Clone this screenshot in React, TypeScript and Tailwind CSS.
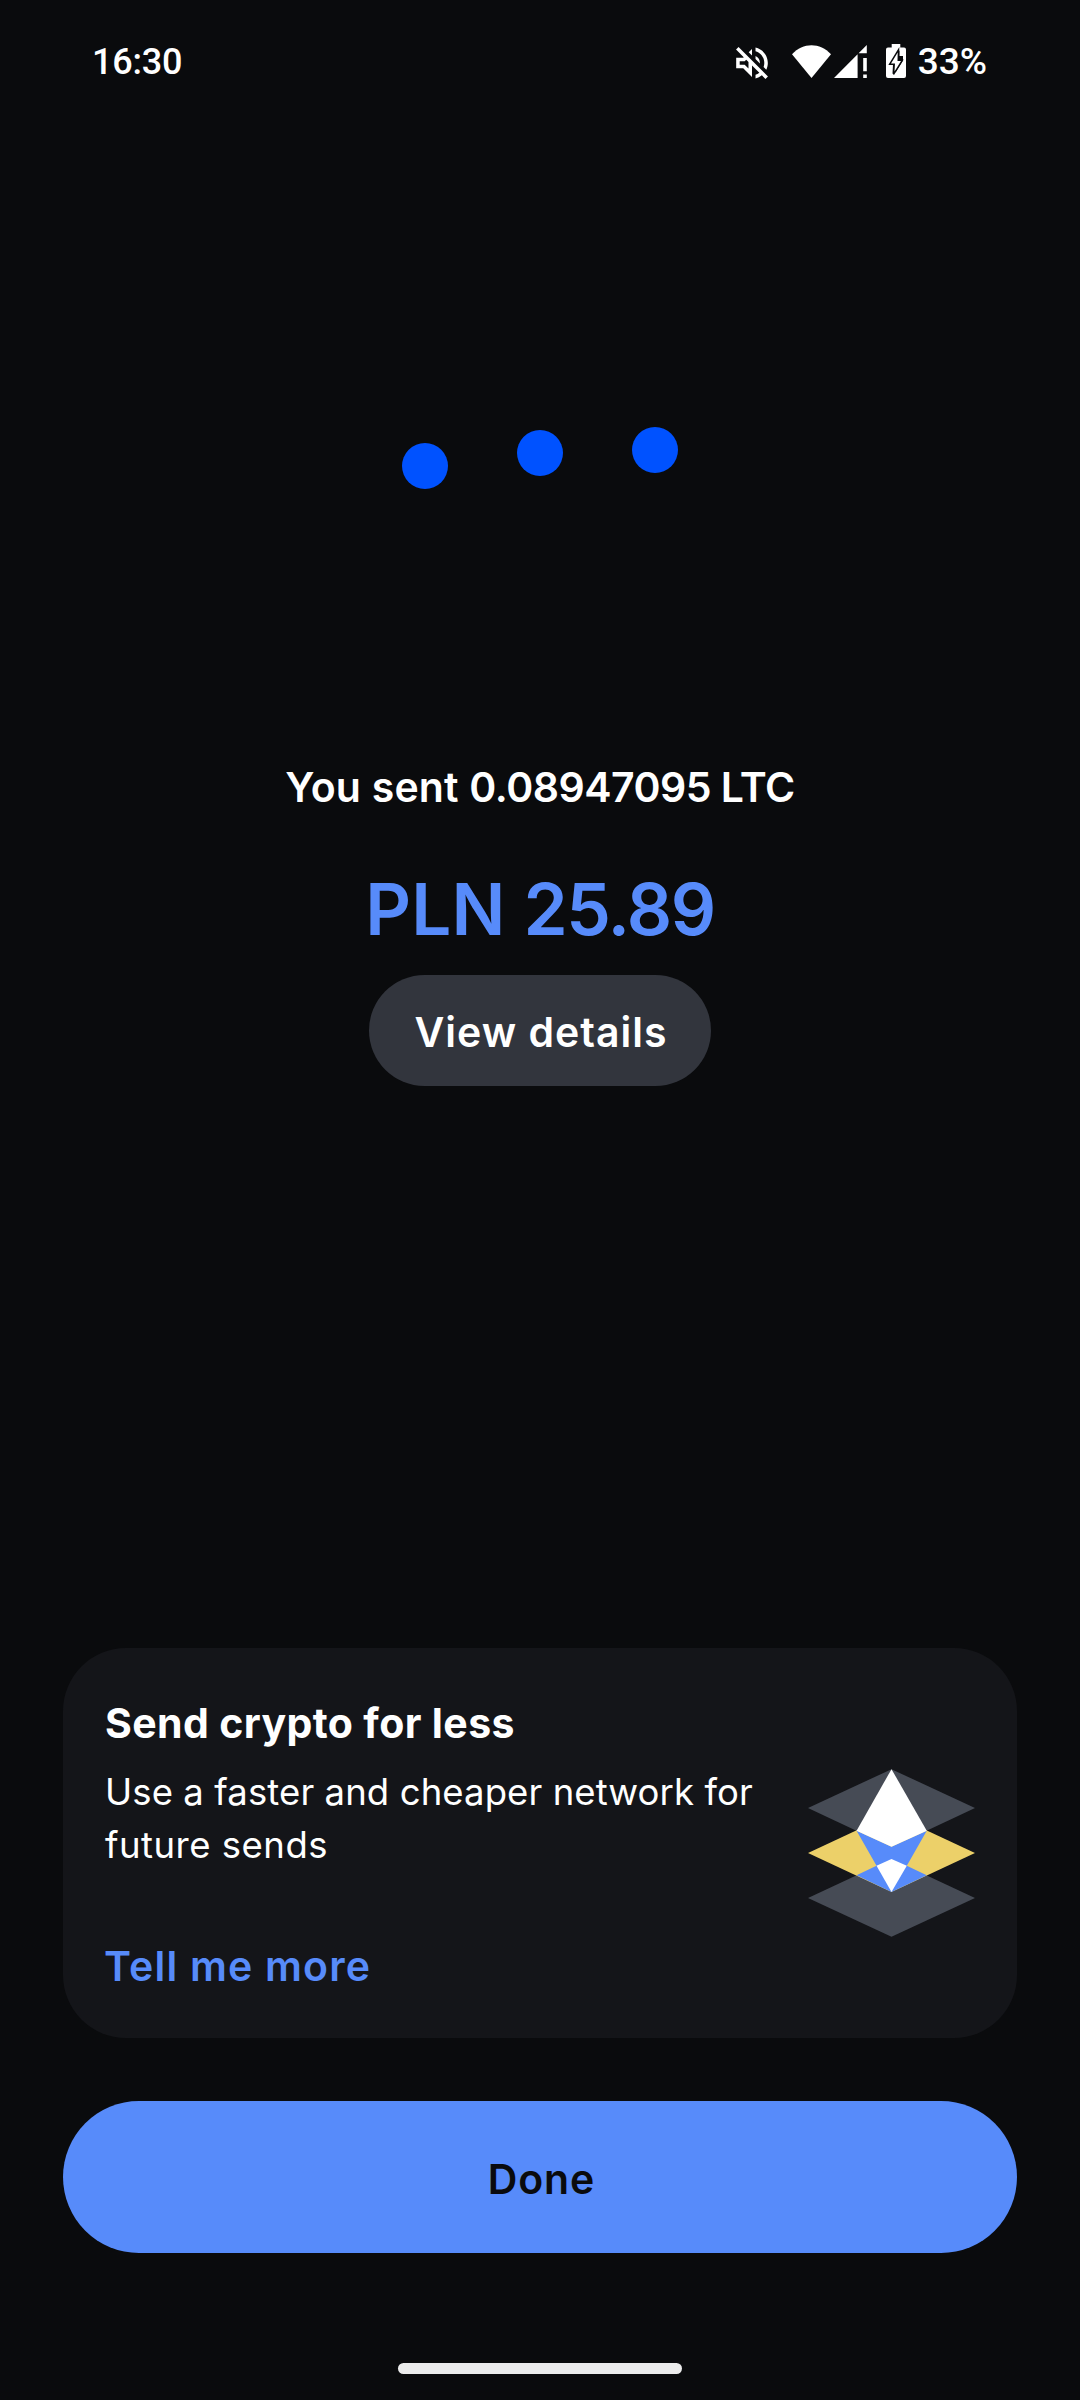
const MutedIcon = () => (
  <svg viewBox="2.9 2.9 18.2 18.2" className="mt-[3px] h-8 w-8 fill-current">
    <path d="M4.34 2.93 2.93 4.34 7.29 8.7 7 9H3v6h4l5 5v-6.59l4.18 4.18c-.65.49-1.38.88-2.18 1.11v2.06a8.94 8.94 0 0 0 3.61-1.75l2.05 2.05 1.41-1.41L4.34 2.93zM10 15.17 7.83 13H5v-2h2.83l.88-.88L10 11.41v3.76zM19 12c0 .82-.15 1.61-.41 2.34l1.53 1.53c.56-1.17.88-2.48.88-3.87 0-4.28-2.99-7.86-7-8.77v2.06c2.89.86 5 3.54 5 6.71zm-7-8-1.88 1.88L12 7.76V4zm4.500 8A4.500 4.500 0 0 0 14 7.970v1.790l2.480 2.480c.01-.08.02-.16.02-.24z" />
  </svg>
);

const WifiIcon = () => (
  <svg viewBox="0 0 39 33" className="ml-6 h-[33px] w-[39px] fill-current">
    <path d="M0 9.2C11-2.9 28-2.9 39 9.2L19.5 33z" />
  </svg>
);

const SignalIcon = () => (
  <svg viewBox="0 0 33 33" className="ml-[3px] h-[33px] w-[33px] fill-current">
    <path d="M0 33 23.6 9.2V33zM24.6 8.2 32.8 0v8.2zM29.2 13h3.6v13.3h-3.6zM29.2 29.4h3.6V33h-3.6z" />
  </svg>
);

const BatteryIcon = () => (
  <svg viewBox="0 0 20 34" className="ml-[19px] h-[34px] w-5 fill-current">
    <path d="M5.7 0h8.6v3.4H18a2 2 0 0 1 2 2V32a2 2 0 0 1-2 2H2a2 2 0 0 1-2-2V5.4a2 2 0 0 1 2-2h3.7z" />
    {/* dark plate cut around the bolt */}
    <path d="M13.5 6.500 3 20.500h4l-.500 9L8 31l9-14.500V12h-3.500z" className="fill-[#0a0b0d]" />
    <path
      d="M11.700 8.500 5 19.500h4L8.500 27.500 15 17h-3.500z"
      className="stroke-[#0a0b0d] stroke-[3px] [paint-order:stroke]"
    />
  </svg>
);

const StatusBar = () => (
  <header className="flex h-[122px] items-center justify-between pr-[93px] pl-[92px] font-['Roboto',sans-serif] font-medium">
    <span className="mt-[2px] text-[36px] leading-none tracking-[-0.2px]">16:30</span>
    <div className="flex items-center">
      <MutedIcon />
      <WifiIcon />
      <SignalIcon />
      <BatteryIcon />
      <span className="mt-px ml-3 text-[37px] leading-none">33%</span>
    </div>
  </header>
);

const LoadingDots = () => (
  <div className="flex h-[63px] items-start justify-center gap-[69px] pt-px">
    <span className="mt-[15px] size-[46px] rounded-full bg-[#0052ff]" />
    <span className="mt-[2px] size-[46px] rounded-full bg-[#0052ff]" />
    <span className="-mt-px size-[46px] rounded-full bg-[#0052ff]" />
  </div>
);

const LayersArt = () => (
  <svg viewBox="82 87 502 504" className="mt-[79px] mr-[0.5px] h-[168px] w-[167px] flex-none">
    <path d="M333 87 584 204 333 322 82 204z" fill="#464b55" />
    <path d="M333 357 584 474 333 591 82 474z" fill="#464b55" />
    <path d="M333 222 584 339 333 456 82 339z" fill="#ecd069" />
    <path d="M228 272 333 320 439 272 379 377 439 406 333 456 228 406 288 377z" fill="#578bfa" />
    <path d="M333 87 439 272 333 320 228 272z" fill="#fff" />
    <path d="M333 357 379 377 333 456 288 377z" fill="#fff" />
  </svg>
);

const PromoCard = () => (
  <section className="mx-[63px] flex h-[390px] justify-between rounded-[63px] bg-[#141519] p-[42px]">
    <div className="whitespace-nowrap">
      <h2 className="mt-[5px] text-[41px] leading-[56px] font-bold tracking-[0.38px]">
        Send crypto for less
      </h2>
      <p className="mt-[15px] text-[36.5px] leading-[53px] tracking-[0.1px]">
        Use a faster and cheaper network for
        <br />
        <span className="tracking-[0.5px]">future sends</span>
      </p>
      <button className="mt-[67px] -ml-px block text-[41px] leading-[54px] font-semibold tracking-[1.2px] text-[#578bfa]">
        Tell me more
      </button>
    </div>
    <LayersArt />
  </section>
);

const App = () => (
  <div className="flex h-[2400px] w-[1080px] flex-col bg-[#0a0b0d] font-['Inter',sans-serif] text-white">
    <StatusBar />

    <main className="flex h-[1526px] flex-col items-center pt-[305px]">
      <LoadingDots />
      <h1 className="mt-[269px] text-[41px] leading-[56px] font-semibold tracking-[-0.5px]">
        <span className="tracking-[0.2px]">You sent </span>
        0.08947095 LTC
      </h1>
      <p className="mt-[50px] text-[71px] leading-[88px] font-semibold tracking-[-1.5px] text-[#578bfa]">
        <span className="tracking-[0.1px]">PLN </span>
        25.89
      </p>
      <button className="mt-[22px] flex h-[111px] w-[342px] items-center justify-center rounded-full bg-[#32353d] pt-[5px] pl-[2px] text-[41px] font-semibold tracking-[1px]">
        View details
      </button>
    </main>

    <PromoCard />

    <button className="mx-[63px] mt-[63px] flex h-[152px] items-center justify-center rounded-full bg-[#578bfa] pt-1.5 pl-[3px] text-[41px] font-semibold tracking-[0.9px] text-[#0a0b0d]">
      Done
    </button>

    <div className="mx-auto mt-auto mb-[26px] h-[11px] w-[284px] rounded-full bg-[#ececec]" />
  </div>
);

export default App;
